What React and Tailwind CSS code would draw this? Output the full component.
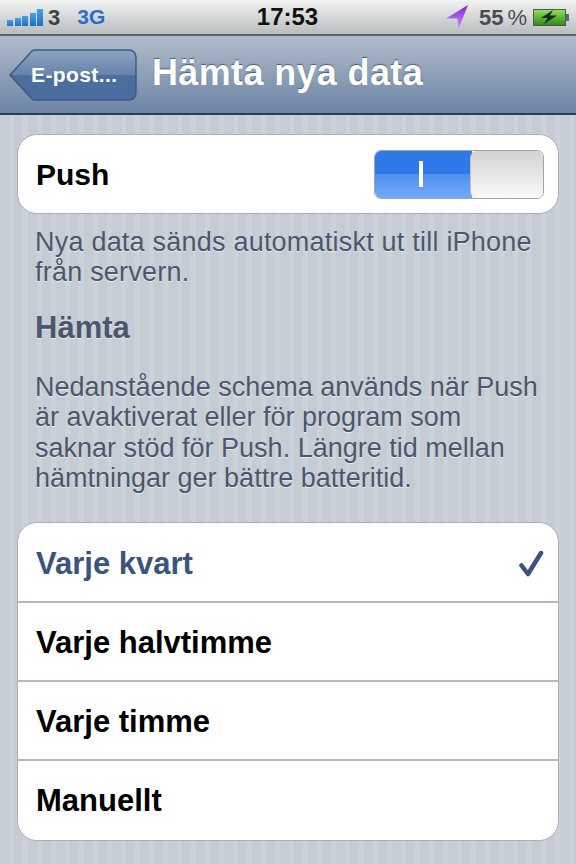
const rows = ['Varje halvtimme', 'Varje timme', 'Manuellt'];

const App = () => {
  return (
    <div className="w-[576px] h-[864px] overflow-hidden font-['Liberation_Sans',Arial,sans-serif] bg-[repeating-linear-gradient(90deg,#c5ccd4_0px,#c5ccd4_9px,#cbd2d9_9px,#cbd2d9_14px)]">
      {/* Status bar */}
      <div className="h-[36px] flex items-center justify-between px-[7px] bg-gradient-to-b from-[#f2f3f3] to-[#b9bdbe] border-b-2 border-[#5f6468]">
        <div className="flex items-center w-[200px]">
          <div className="flex items-end gap-[1.5px] h-[17px]">
            <span className="w-[6px] h-[6px] bg-gradient-to-b from-[#4aa0e8] to-[#1f6fc0]"></span>
            <span className="w-[6px] h-[8px] bg-gradient-to-b from-[#4aa0e8] to-[#1f6fc0]"></span>
            <span className="w-[6px] h-[10px] bg-gradient-to-b from-[#4aa0e8] to-[#1f6fc0]"></span>
            <span className="w-[6px] h-[13px] bg-gradient-to-b from-[#4aa0e8] to-[#1f6fc0]"></span>
            <span className="w-[6px] h-[17px] bg-gradient-to-b from-[#4aa0e8] to-[#1f6fc0]"></span>
          </div>
          <span className="ml-[5px] text-[22px] font-bold text-[#3d4144]">3</span>
          <span className="ml-[17px] text-[21px] font-bold text-[#2c6fc4]">3G</span>
        </div>
        <span className="text-[24px] font-bold text-[#111] ml-[-1px]">17:53</span>
        <div className="flex items-center justify-end w-[200px]">
          <svg width="24" height="26" viewBox="0 0 24 26">
            <defs>
              <linearGradient id="arrow" x1="0" y1="0" x2="0" y2="1">
                <stop offset="0" stopColor="#7a22dc" />
                <stop offset="1" stopColor="#d09af5" />
              </linearGradient>
            </defs>
            <path d="M23 1L1 14.500L12.500 14.500L13.500 25Z" fill="url(#arrow)" />
          </svg>
          <span className="ml-[10px] text-[22px] font-bold text-[#4a4d50]">55</span>
          <span className="ml-[4px] text-[22px] text-[#4a4d50]">%</span>
          <div className="ml-[6px] flex items-center">
            <div className="w-[33px] h-[17px] border border-[#555] bg-gradient-to-b from-[#8fe05a] to-[#2f8a1c] flex items-center justify-center">
              <svg width="20" height="14" viewBox="0 0 20 14">
                <path d="M14 0L2 8L8.500 8L5 14L18 5.500L11 5.500Z" fill="#1c2a14" />
              </svg>
            </div>
            <span className="w-[3px] h-[7px] bg-[#666]"></span>
          </div>
        </div>
      </div>

      {/* Nav bar */}
      <div className="h-[79px] flex items-center bg-gradient-to-b from-[#b1bccb] to-[#6c84a4] border-b-2 border-[#2f3d55]">
        <div className="ml-[9px] relative w-[128px] h-[52px]">
          <svg className="absolute inset-0" width="128" height="52" viewBox="0 0 128 52">
            <defs>
              <linearGradient id="back" x1="0" y1="0" x2="0" y2="1">
                <stop offset="0" stopColor="#8ea4c2" />
                <stop offset="0.5" stopColor="#6683aa" />
                <stop offset="0.5" stopColor="#4d6f9f" />
                <stop offset="1" stopColor="#4a6d9e" />
              </linearGradient>
            </defs>
            <path d="M1 26L23 2Q24 1 27 1L119 1Q127 1 127 9L127 43Q127 51 119 51L27 51Q24 51 23 50Z" fill="url(#back)" stroke="#3e5a82" strokeWidth="1.500" />
          </svg>
          <span className="absolute left-[22px] top-[14px] text-[21px] leading-[24px] font-bold text-white tracking-[0.4px]">E-post...</span>
        </div>
        <h1 className="ml-[15px] mb-[3px] text-[36px] font-bold text-white tracking-[0.35px] [text-shadow:0_-1px_1px_#4a5a72]">Hämta nya data</h1>
      </div>

      {/* Content */}
      <div className="px-[17px] pt-[19px]">
        <div className="h-[80px] bg-white rounded-[20px] border border-[#a9afb6] flex items-center justify-between pl-[18px] pr-[14px]">
          <span className="text-[30px] font-bold text-black">Push</span>
          <div className="w-[170px] h-[49px] rounded-[7px] border border-[#a0a6ad] flex overflow-hidden">
            <div className="w-[97px] pr-[5px] flex flex-col relative items-center justify-center">
              <div className="absolute inset-x-0 top-0 h-[25px] bg-[#2f78ea]"></div>
              <div className="absolute inset-x-0 bottom-0 h-[24px] bg-gradient-to-b from-[#4d8ff0] to-[#74aaf6]"></div>
              <div className="relative w-[4px] h-[26px] bg-white"></div>
            </div>
            <div className="flex-1 rounded-[7px] ml-[-2px] relative bg-gradient-to-b from-[#d2d2d2] to-[#fbfbfb] border-l border-[#c4c4c4]"></div>
          </div>
        </div>

        <p className="mt-[13px] ml-[18px] mr-[10px] text-[27px] leading-[30px] tracking-[0.22px] text-[#4c566c] [text-shadow:0_1px_0_#e6eaee]">
          Nya data sänds automatiskt ut till iPhone från servern.
        </p>
        <h2 className="mt-[24px] mx-[18px] text-[31px] leading-[34px] font-bold text-[#4c566c] [text-shadow:0_1px_0_#e6eaee]">Hämta</h2>
        <p className="mt-[27px] ml-[18px] mr-[10px] text-[27px] leading-[30.300px] text-[#4c566c] [text-shadow:0_1px_0_#e6eaee]">
          Nedanstående schema används när Push är avaktiverat eller för program som saknar stöd för Push. Längre tid mellan hämtningar ger bättre batteritid.
        </p>

        {/* Interval list */}
        <div className="mt-[29px] pb-[2px] bg-white rounded-[20px] border border-[#a9afb6]">
          <div className="h-[78px] pt-[4px] flex items-center justify-between pl-[18px] pr-[14px]">
            <span className="text-[31px] font-bold text-[#3a5482]">Varje kvart</span>
            <svg width="26" height="28" viewBox="0 0 26 28">
              <path d="M3.500 15.500L10 24L23 3" fill="none" stroke="#37537f" strokeWidth="4.500" strokeLinecap="round" strokeLinejoin="round" />
            </svg>
          </div>
          {rows.map((row) => (
            <div key={row} className="h-[79px] pt-[4px] flex items-center pl-[18px] border-t-2 border-[#b5b8bc]">
              <span className="text-[31px] font-bold text-black">{row}</span>
            </div>
          ))}
        </div>
      </div>
    </div>
  );
};

export default App;
